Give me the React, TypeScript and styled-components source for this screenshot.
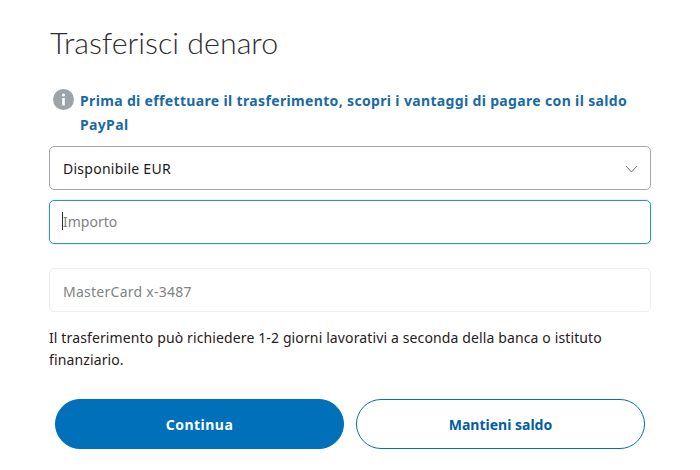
import React from "react";
import styled, { createGlobalStyle } from "styled-components";

const Global = createGlobalStyle`
  html, body { margin: 0; padding: 0; background: #fff; }
  body { font-family: "Noto Sans", "Open Sans", sans-serif; color: #2c2e2f; }
`;

const Page = styled.main`
  width: 700px;
  height: 470px;
  box-sizing: border-box;
  padding: 22px 49px 0;
  overflow: hidden;
`;

const Title = styled.h1`
  margin: 0;
  font-family: "Lato", sans-serif;
  font-weight: 300;
  font-size: 30.4px;
  line-height: 40px;
  color: #2c2e2f;
  padding-left: 1px;
`;

const Notice = styled.div`
  display: flex;
  align-items: flex-start;
  gap: 5px;
  margin: 25px 0 0 4px;
`;

const InfoIcon = styled.svg`
  flex: none;
  width: 21px;
  height: 21px;
  margin-top: 2px;
`;

const NoticeText = styled.p`
  margin: 0 0 0 1px;
  font-size: 14px;
  font-weight: 700;
  line-height: 24px;
  letter-spacing: 0.345px;
  color: #1a6aa3;
  padding-top: 2px;
`;

const Fields = styled.div`
  display: flex;
  flex-direction: column;
  margin-top: 9px;
`;

const Field = styled.div<{ $variant: "select" | "focus" | "disabled" }>`
  box-sizing: border-box;
  height: 44px;
  display: flex;
  align-items: center;
  justify-content: space-between;
  padding: ${(p) => (p.$variant === "disabled" ? "2px" : "0")} 12px 0 13px;
  border-radius: 5px;
  font-size: 14px;
  letter-spacing: ${(p) => (p.$variant === "focus" ? "0" : "0.26px")};
  border: 1px solid
    ${(p) => (p.$variant === "select" ? "#a4a6a8" : p.$variant === "focus" ? "#3a93ad" : "#eeeeee")};
  color: ${(p) => (p.$variant === "select" ? "#1a1a1a" : "#7f8284")};
  box-shadow: ${(p) => (p.$variant === "focus" ? "0 0 0 1px #dff5f9" : "none")};
  margin-top: ${(p) => (p.$variant === "focus" ? "10px" : p.$variant === "disabled" ? "24px" : "0")};
`;

const Caret = styled.span`
  display: inline-block;
  width: 1px;
  height: 18px;
  background: #2c2e2f;
`;

const FieldValue = styled.span`
  display: flex;
  align-items: center;
  margin: -2px 0 0 -1px;
`;

const Chevron = styled.svg`
  width: 13px;
  height: 8px;
  margin-top: 1px;
`;

const Help = styled.p`
  margin: 15px 0 0;
  font-size: 14px;
  line-height: 22px;
  color: #1f2021;
  letter-spacing: 0.125px;
`;

const Actions = styled.div`
  display: flex;
  gap: 12px;
  margin: 28px 6px 0;
`;

const Button = styled.button<{ $primary?: boolean }>`
  flex: 1;
  height: 50px;
  border-radius: 25px;
  border: 1px solid #0070ba;
  font-family: "Noto Sans", sans-serif;
  font-size: 14px;
  font-weight: 700;
  letter-spacing: ${(p) => (p.$primary ? "0.5px" : "0")};
  background: ${(p) => (p.$primary ? "#0070ba" : "#fff")};
  color: ${(p) => (p.$primary ? "#fff" : "#005ea6")};
`;

export default function App() {
  return (
    <Page>
      <Global />
      <Title>Trasferisci denaro</Title>
      <Notice>
        <InfoIcon viewBox="0 0 21 21">
          <circle cx="10.5" cy="10.5" r="10.5" fill="#9da3a6" />
          <circle cx="10.5" cy="6" r="1.5" fill="#fff" />
          <rect x="9.2" y="9" width="2.6" height="7.5" fill="#fff" />
        </InfoIcon>
        <NoticeText>
          Prima di effettuare il trasferimento, scopri i vantaggi di pagare con il saldo PayPal
        </NoticeText>
      </Notice>
      <Fields>
        <Field $variant="select">
          <span>Disponibile EUR</span>
          <Chevron viewBox="0 0 13 8">
            <path d="M1 1l5.5 6L12 1" fill="none" stroke="#6c7378" strokeWidth="1" />
          </Chevron>
        </Field>
        <Field $variant="focus">
          <FieldValue>
            <Caret />
            Importo
          </FieldValue>
        </Field>
        <Field $variant="disabled">MasterCard x-3487</Field>
      </Fields>
      <Help>
        Il trasferimento può richiedere 1-2 giorni lavorativi a seconda della banca o istituto finanziario.
      </Help>
      <Actions>
        <Button $primary>Continua</Button>
        <Button>Mantieni saldo</Button>
      </Actions>
    </Page>
  );
}
